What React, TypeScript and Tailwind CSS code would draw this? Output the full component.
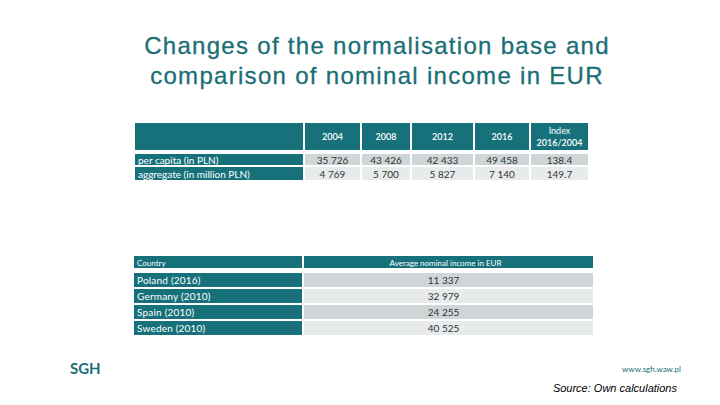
import React from "react";

const TEAL = "bg-[#17717b]";

export default function App() {
  const cols = ["2004", "2008", "2012", "2016"];
  const rows1 = [
    { label: "per capita (in PLN)", vals: ["35 726", "43 426", "42 433", "49 458", "138.4"], bg: "bg-[#cfd6d8]", h: "h-[11px]" },
    { label: "aggregate (in million PLN)", vals: ["4 769", "5 700", "5 827", "7 140", "149.7"], bg: "bg-[#e8ebec]", h: "h-[13px]" },
  ];
  const rows2 = [
    { label: "Poland (2016)", val: "11 337", bg: "bg-[#cfd6d8]" },
    { label: "Germany (2010)", val: "32 979", bg: "bg-[#e8ebec]" },
    { label: "Spain (2010)", val: "24 255", bg: "bg-[#cfd6d8]" },
    { label: "Sweden (2010)", val: "40 525", bg: "bg-[#e8ebec]" },
  ];
  return (
    <div className="w-[720px] h-[405px] bg-white relative overflow-hidden" style={{ fontFamily: "Lato, 'Liberation Sans', sans-serif" }}>
      <div className="pt-[31px] flex justify-center">
        <h1 className="ml-[34px] text-[24px] leading-[30px] tracking-[1.3px] text-[#1a6e76] text-center" style={{ fontFamily: "'Liberation Sans', Arial, sans-serif", WebkitTextStroke: "0.3px #1a6e76" }}>
          Changes of the normalisation base and
          <br />
          comparison of nominal income in EUR
        </h1>
      </div>

      {/* Table 1 */}
      <div className="mt-[32px] ml-[135px] grid grid-cols-[168px_55px_48px_61px_54px_57px] gap-x-[2px]">
        <div className={`${TEAL} h-[27px]`} />
        {cols.map((c) => (
          <div key={c} className={`${TEAL} h-[27px] flex items-center justify-center text-white text-[9px] font-semibold`}>{c}</div>
        ))}
        <div className={`${TEAL} h-[27px] flex flex-col items-center justify-center text-white text-[9px] leading-[12px]`}>
          <span>Index</span>
          <span className="font-semibold">2016/2004</span>
        </div>
      </div>
      <div className="mt-[4px] ml-[135px] flex flex-col gap-y-[2px]">
        {rows1.map((r) => (
          <div key={r.label} className="grid grid-cols-[168px_55px_48px_61px_54px_57px] gap-x-[2px]">
            <div className={`${TEAL} ${r.h} flex items-center pl-[3px] text-white text-[10px] leading-none`}>{r.label}</div>
            {r.vals.map((v, i) => (
              <div key={i} className={`${r.bg} ${r.h} flex items-center justify-center text-[#333] text-[10px] leading-none`}>{v}</div>
            ))}
          </div>
        ))}
      </div>

      {/* Table 2 */}
      <div className="mt-[76px] ml-[134px] flex flex-col">
        <div className="grid grid-cols-[168px_289px] gap-x-[2px]">
          <div className={`${TEAL} h-[12px] flex items-end pl-[3px] text-white text-[8px] leading-[10px]`}>Country</div>
          <div className={`${TEAL} h-[12px] flex items-end justify-center text-white text-[8px] leading-[10px] pr-[6px]`}>Average nominal income in EUR</div>
        </div>
        <div className="mt-[5px] flex flex-col gap-y-[2px]">
          {rows2.map((r) => (
            <div key={r.label} className="grid grid-cols-[168px_289px] gap-x-[2px]">
              <div className={`${TEAL} h-[14px] flex items-center pl-[3px] text-white text-[10px] leading-none tracking-[0.2px]`}>{r.label}</div>
              <div className={`${r.bg} h-[14px] flex items-center justify-center text-[#333] text-[10px] leading-none pr-[10px]`}>{r.val}</div>
            </div>
          ))}
        </div>
      </div>

      {/* Footer */}
      <div className="mt-[26px] flex items-start justify-between pl-[70px] pr-[39px]">
        <div className="text-[#1a6e76] text-[15px] font-bold leading-none">SGH</div>
        <div className="text-[#1a6e76] text-[8px] leading-none mt-[4px]">www.sgh.waw.pl</div>
      </div>
      <div className="flex justify-end pr-[43px] mt-[7px]">
        <div className="italic text-black text-[11px] leading-none" style={{ fontFamily: "'Liberation Sans', Arial, sans-serif" }}>Source: Own calculations</div>
      </div>
    </div>
  );
}
